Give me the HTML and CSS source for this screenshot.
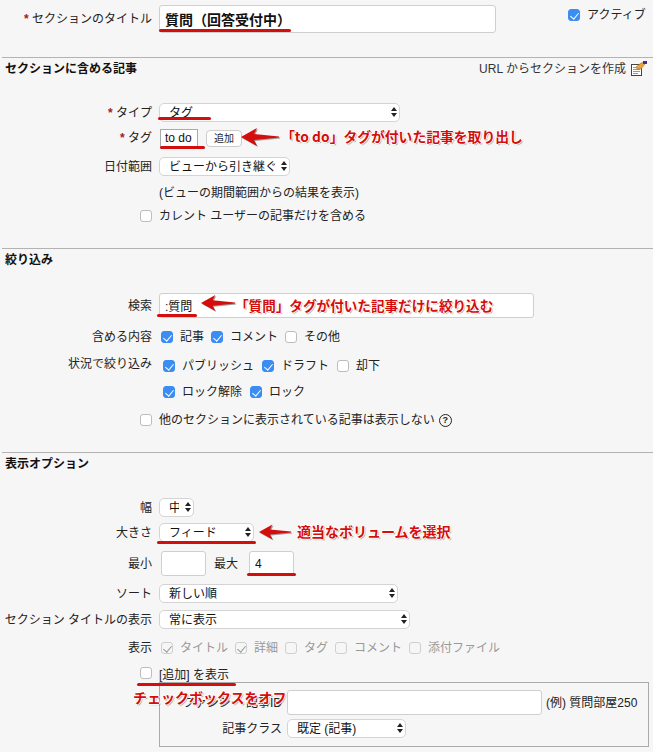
FILE: index.html
```html
<!DOCTYPE html>
<html lang="ja">
<head>
    <meta charset="UTF-8">
    <title>セクションの編集</title>
    <link rel="stylesheet" href="styles.css">
</head>
<body>
    <div class="page">
        <div class="title-row">
            <label class="label"><b class="req">*</b> セクションのタイトル</label>
            <input class="text title-input" type="text" value="質問（回答受付中）">
            <label class="active"><input type="checkbox" class="check" checked> アクティブ</label>
        </div>

        <section class="section first">
            <div class="section-head">
                <h3>セクションに含める記事</h3>
                <a href="#" class="url-link">URL からセクションを作成
                    <svg width="17" height="15" viewBox="0 0 17 15">
                        <rect x="1.5" y="3.5" width="10" height="11" fill="#fff" stroke="#444"/>
                        <path d="M3 6.5h7M3 8.5h7M3 10.5h7M3 12.5h5" stroke="#999"/>
                        <path d="M6 6l5-4 3-1 1 2-4 5-4 0z" fill="#e8a33c" stroke="#a8671a" stroke-width=".5"/>
                        <rect x="13" y="0" width="4" height="3" fill="#4a2a9a"/>
                    </svg>
                </a>
            </div>
            <div class="row r-type">
                <label class="label"><b class="req">*</b> タイプ</label>
                <div class="select w-type"><select><option>タグ</option></select></div>
            </div>
            <div class="row r-tag">
                <label class="label"><b class="req">*</b> タグ</label>
                <input class="tag-input" type="text" value="to do">
                <button class="add">追加</button>
            </div>
            <div class="row r-date">
                <label class="label">日付範囲</label>
                <div class="select w-date"><select><option>ビューから引き継ぐ</option></select></div>
            </div>
            <div class="row r-note">
                <span class="label"></span>
                <span>(ビューの期間範囲からの結果を表示)</span>
            </div>
            <div class="row r-own">
                <span class="label tick-cell"><input type="checkbox" class="check"></span>
                <span>カレント ユーザーの記事だけを含める</span>
            </div>
        </section>

        <section class="section second">
            <div class="section-head"><h3>絞り込み</h3></div>
            <div class="row r-search">
                <label class="label">検索</label>
                <input class="text search" type="text" value=":質問">
            </div>
            <div class="row r-include">
                <label class="label">含める内容</label>
                <div class="checks">
                    <label><input type="checkbox" class="check" checked> 記事</label>
                    <label><input type="checkbox" class="check" checked> コメント</label>
                    <label><input type="checkbox" class="check"> その他</label>
                </div>
            </div>
            <div class="row r-status">
                <label class="label status-label">状況で絞り込み</label>
                <div class="status-checks">
                    <div class="checks">
                        <label><input type="checkbox" class="check" checked> パブリッシュ</label>
                        <label><input type="checkbox" class="check" checked> ドラフト</label>
                        <label><input type="checkbox" class="check"> 却下</label>
                    </div>
                    <div class="checks">
                        <label><input type="checkbox" class="check" checked> ロック解除</label>
                        <label><input type="checkbox" class="check" checked> ロック</label>
                    </div>
                </div>
            </div>
            <div class="row r-other">
                <span class="label tick-cell"><input type="checkbox" class="check"></span>
                <span>他のセクションに表示されている記事は表示しない</span>
                <span class="help">?</span>
            </div>
        </section>

        <section class="section third">
            <div class="section-head"><h3>表示オプション</h3></div>
            <div class="row r-width">
                <label class="label">幅</label>
                <div class="select w-width"><select><option>中</option></select></div>
            </div>
            <div class="row r-size">
                <label class="label">大きさ</label>
                <div class="select w-size"><select><option>フィード</option></select></div>
            </div>
            <div class="row r-minmax">
                <label class="label">最小</label>
                <input class="text num" type="text">
                <label class="max-label">最大</label>
                <input class="text num max" type="text" value="4">
            </div>
            <div class="row r-sort">
                <label class="label">ソート</label>
                <div class="select w-sort"><select><option>新しい順</option></select></div>
            </div>
            <div class="row r-title">
                <label class="label">セクション タイトルの表示</label>
                <div class="select w-title"><select><option>常に表示</option></select></div>
            </div>
            <div class="row r-show">
                <label class="label">表示</label>
                <div class="checks off">
                    <label><input type="checkbox" class="check" checked disabled> タイトル</label>
                    <label><input type="checkbox" class="check" checked disabled> 詳細</label>
                    <label><input type="checkbox" class="check" disabled> タグ</label>
                    <label><input type="checkbox" class="check" disabled> コメント</label>
                    <label><input type="checkbox" class="check" disabled> 添付ファイル</label>
                </div>
            </div>
            <div class="row r-addshow">
                <span class="label tick-cell"><input type="checkbox" class="check"></span>
                <span>[追加] を表示</span>
            </div>
            <div class="add-box">
                <div class="box-row">
                    <label class="box-label">ファンシー 記事ID</label>
                    <input class="text box-input" type="text">
                    <span>(例) 質問部屋250</span>
                </div>
                <div class="box-row second-box-row">
                    <label class="box-label">記事クラス</label>
                    <div class="select w-class"><select><option>既定 (記事)</option></select></div>
                </div>
            </div>
        </section>

        <!-- annotations drawn over the screenshot -->
        <i class="mark m-title"></i>
        <i class="mark m-type"></i>
        <i class="mark m-tag"></i>
        <i class="mark m-search"></i>
        <i class="mark m-size"></i>
        <i class="mark m-max"></i>
        <i class="mark m-add"></i>

        <svg class="arrow a-tag" width="38" height="20" viewBox="0 0 38 20"><path d="M0 10L16 1l-3 6 25 2.500v1L13 13l3 6z"/></svg>
        <svg class="arrow a-search" width="34" height="20" viewBox="0 0 38 20"><path d="M0 10L16 1l-3 6 25 2.500v1L13 13l3 6z"/></svg>
        <svg class="arrow a-size" width="32" height="20" viewBox="0 0 38 20"><path d="M0 10L16 1l-3 6 25 2.500v1L13 13l3 6z"/></svg>

        <span class="note n-tag">「to do」タグが付いた記事を取り出し</span>
        <span class="note n-search">「質問」タグが付いた記事だけに絞り込む</span>
        <span class="note n-size">適当なボリュームを選択</span>
        <span class="note n-add">チェックボックスをオフ</span>
    </div>
</body>
</html>
```

FILE: styles.css
```css
* {
    box-sizing: border-box;
}

html, body {
    margin: 0;
    padding: 0;
}

body {
    background-color: #f6f6f6;
    color: #222;
    font-family: "Liberation Sans", "Noto Sans CJK JP", sans-serif;
    font-size: 12px;
    line-height: 16px;
}

.page {
    position: relative;
    width: 653px;
    height: 752px;
    overflow: hidden;
    padding-top: 5px;
}

/* shared form parts */
.row {
    display: flex;
    align-items: center;
    gap: 7px;
}

.label {
    flex: none;
    width: 152px;
    text-align: right;
}

.req {
    color: #a02020;
}

.tick-cell {
    height: 16px;
    display: flex;
    justify-content: flex-end;
    align-items: center;
}

.text {
    height: 25px;
    padding: 0 5px;
    background: #fff;
    border: 1px solid #cfcfcf;
    border-radius: 3px;
    font: inherit;
    color: #111;
}

.select {
    position: relative;
    height: 19px;
}

.select select {
    width: 100%;
    height: 100%;
    padding: 0 14px 0 9px;
    background: #fff;
    border: 1px solid #d4d4d4;
    border-radius: 5px;
    font: inherit;
    color: #111;
    appearance: none;
}

.select::before,
.select::after {
    content: "";
    position: absolute;
    right: 3px;
    border-left: 3px solid transparent;
    border-right: 3px solid transparent;
}

.select::before {
    top: 4px;
    border-bottom: 4px solid #222;
}

.select::after {
    top: 10px;
    border-top: 4px solid #222;
}

.check {
    flex: none;
    width: 12px;
    height: 12px;
    margin: 0;
    position: relative;
    background: #fff;
    border: 1px solid #bdbdbd;
    border-radius: 3px;
    appearance: none;
}

.check:checked {
    background: #3b8df2;
    border-color: #3b8df2;
}

.check:checked::after {
    content: "";
    position: absolute;
    left: 3px;
    top: 1px;
    width: 4px;
    height: 7px;
    border: solid #fff;
    border-width: 0 1.5px 1.5px 0;
    transform: rotate(40deg);
}

.check:disabled {
    background: #f6f6f6;
    border-color: #cfcfcf;
}

.check:disabled:checked::after {
    border-color: #999;
}

.checks {
    display: flex;
    align-items: center;
    gap: 7px;
    margin-left: 2px;
}

.checks label {
    display: flex;
    align-items: center;
    gap: 7px;
}

.checks.off {
    color: #999;
}

/* top row */
.title-row {
    display: flex;
    gap: 7px;
    height: 28px;
    align-items: center;
}

.title-input {
    width: 337px;
    height: 28px;
    font-size: 14px;
    font-weight: bold;
}

.active {
    display: flex;
    align-items: center;
    gap: 7px;
    margin-left: 65px;
    margin-top: -8px;
}

/* sections */
.section {
    margin-left: 2px;
    border-top: 1px solid #b3b3b3;
}

.section-head {
    display: flex;
    justify-content: space-between;
    align-items: center;
    height: 21px;
    padding: 0 6px 0 3px;
}

.section-head h3 {
    margin: 0;
    font-size: 12px;
    line-height: 16px;
    color: #111;
}

.url-link {
    display: flex;
    align-items: center;
    gap: 4px;
    color: #333;
    text-decoration: none;
}

.first {
    margin-top: 24px;
    height: 191px;
}

.second {
    height: 204px;
}

.third {
    height: 300px;
}

.section .row {
    margin-left: -2px;
}

/* first section rows */
.r-type { margin-top: 24px; }
.w-type { width: 241px; }
.r-tag { margin-top: 7px; height: 18px; }
.tag-input {
    width: 38px;
    height: 18px;
    margin-left: 1px;
    padding: 0 4px;
    background: #fff;
    border: 1px solid #aaa;
    font: inherit;
    color: #111;
}
.add {
    height: 17px;
    width: 36px;
    margin-left: 1px;
    padding: 0;
    background: #fff;
    border: 1px solid #ccc;
    border-radius: 4px;
    font: inherit;
    font-size: 10px;
    color: #222;
}
.r-date { margin-top: 10px; }
.w-date { width: 131px; }
.r-note { margin-top: 9px; }
.r-own { margin-top: 7px; }

/* second section rows */
.r-search { margin-top: 23px; }
.search { width: 375px; }
.r-include { margin-top: 11px; }
.r-status {
    margin-top: 10px;
    align-items: flex-start;
}
.status-label { margin-top: 1px; }
.status-checks {
    display: flex;
    flex-direction: column;
    gap: 10px;
    margin-top: 3px;
    margin-left: 2px;
}
.status-checks .checks { gap: 8px; }
.r-other { margin-top: 12px; }
.help {
    width: 13px;
    height: 13px;
    margin-left: -3px;
    border: 1.5px solid #222;
    border-radius: 50%;
    font-size: 9px;
    font-weight: bold;
    line-height: 10px;
    text-align: center;
}

/* third section rows */
.r-width { margin-top: 24px; }
.w-width { width: 35px; }
.r-size { margin-top: 6px; }
.w-size { width: 95px; }
.r-minmax { margin-top: 9px; }
.num {
    width: 45px;
    margin-left: 2px;
}
.max-label { margin-left: 1px; }
.max { margin-left: 4px; }
.r-sort { margin-top: 8px; }
.w-sort { width: 239px; }
.r-title { margin-top: 7px; }
.w-title { width: 251px; }
.r-show { margin-top: 11px; }
.r-addshow { margin-top: 11px; }
.r-addshow .check { margin-top: -4px; }

.add-box {
    margin-top: -1px;
    margin-left: 157px;
    width: 490px;
    height: 65px;
    padding-top: 7px;
    border: 1px solid #aaa;
}

.box-row {
    display: flex;
    align-items: center;
    gap: 5px;
}

.box-label {
    width: 122px;
    text-align: right;
}

.box-input {
    width: 255px;
    margin-left: 0;
}

.box-row span {
    margin-left: -1px;
}

.second-box-row {
    margin-top: 4px;
}

.w-class { width: 119px; }

/* red annotations */
.mark {
    position: absolute;
    height: 3px;
    background: #d40d0d;
    border-radius: 2px;
}
.m-title { left: 159px; top: 29px; width: 132px; }
.m-type { left: 158px; top: 117px; width: 53px; }
.m-tag { left: 160px; top: 146px; width: 45px; }
.m-search { left: 157px; top: 314px; width: 40px; }
.m-size { left: 157px; top: 541px; width: 99px; }
.m-max { left: 247px; top: 573px; width: 49px; }
.m-add { left: 137px; top: 683px; width: 99px; }

.arrow {
    position: absolute;
    fill: #d40d0d;
    filter: drop-shadow(1px 1px 0 #999);
}
.a-tag { left: 241px; top: 127px; }
.a-search { left: 201px; top: 293px; }
.a-size { left: 259px; top: 522px; }

.note {
    position: absolute;
    font-family: "Noto Sans CJK JP", sans-serif;
    font-size: 14px;
    font-weight: bold;
    line-height: 18px;
    white-space: nowrap;
    color: #d40d0d;
    text-shadow: 1px 0 0 #fff, -1px 0 0 #fff, 0 1px 0 #fff, 0 -1px 0 #fff, 1px 1px 1px #777;
}
.n-tag { left: 281px; top: 127px; font-size: 13.8px; }
.n-search { left: 235px; top: 296px; font-size: 13.6px; }
.n-size { left: 297px; top: 522px; }
.n-add { left: 133px; top: 688px; }
```
